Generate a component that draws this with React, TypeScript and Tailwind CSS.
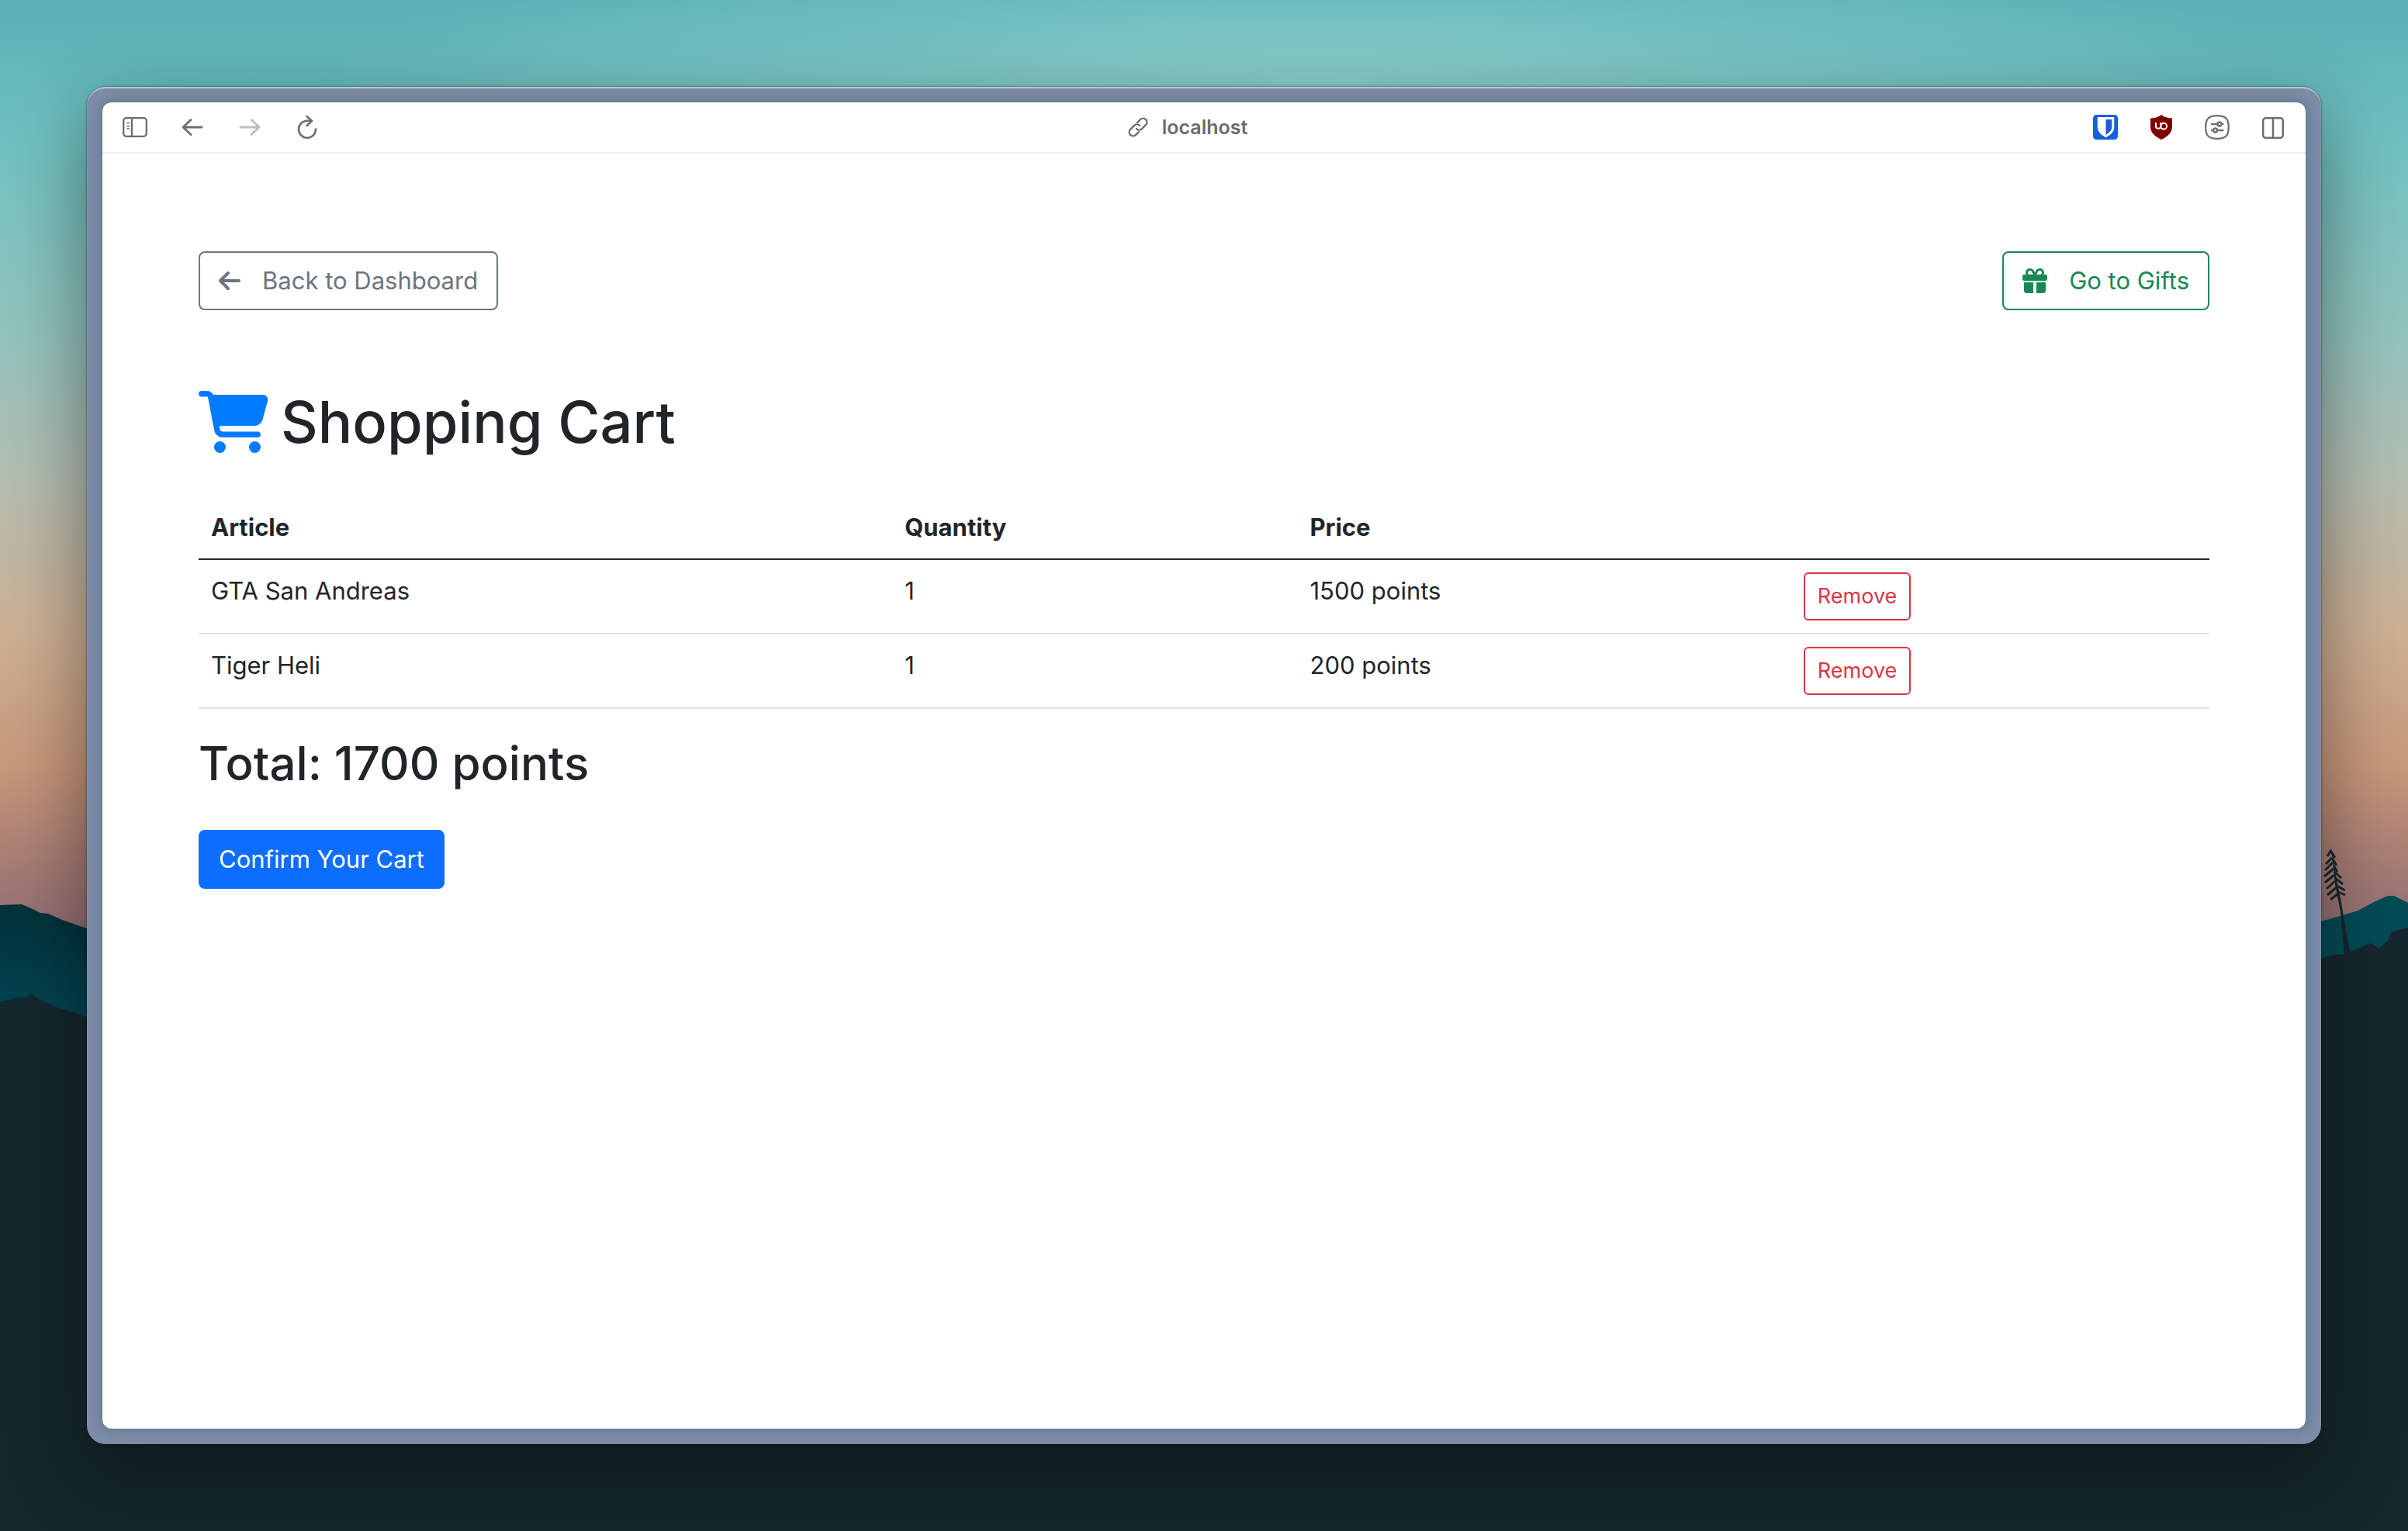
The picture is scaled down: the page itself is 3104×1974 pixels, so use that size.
import React from "react";
import { FaArrowLeft, FaCartShopping, FaGift } from "react-icons/fa6";

type Item = { name: string; quantity: number; price: number };

const items: Item[] = [
  { name: "GTA San Andreas", quantity: 1, price: 1500 },
  { name: "Tiger Heli", quantity: 1, price: 200 },
];

function Wallpaper() {
  return (
    <svg
      aria-hidden="true"
      className="absolute inset-0 h-full w-full"
      viewBox="0 0 3104 1974"
      preserveAspectRatio="none"
    >
      <defs>
        <linearGradient id="sky" x1="0" y1="0" x2="0" y2="1240" gradientUnits="userSpaceOnUse">
          <stop offset="0" stopColor="#58b0b4" />
          <stop offset="0.16" stopColor="#72c2c0" />
          <stop offset="0.35" stopColor="#93c3bd" />
          <stop offset="0.5" stopColor="#b4bdb0" />
          <stop offset="0.66" stopColor="#cdb093" />
          <stop offset="0.8" stopColor="#c7977a" />
          <stop offset="0.9" stopColor="#a67c74" />
          <stop offset="1" stopColor="#876872" />
        </linearGradient>
        <radialGradient id="glow" cx="1700" cy="130" r="1" gradientUnits="userSpaceOnUse" gradientTransform="translate(1700 130) scale(1300 260) translate(-1700 -130)">
          <stop offset="0" stopColor="#a4dcd6" stopOpacity="0.6" />
          <stop offset="1" stopColor="#a4dcd6" stopOpacity="0" />
        </radialGradient>
        <linearGradient id="ridge" x1="0" y1="1160" x2="0" y2="1310" gradientUnits="userSpaceOnUse">
          <stop offset="0" stopColor="#023038" />
          <stop offset="1" stopColor="#024652" />
        </linearGradient>
      </defs>
      <rect width="3104" height="1974" fill="url(#sky)" />
      <rect width="3104" height="400" fill="url(#glow)" />
      <path
        d="M0 1167 28 1166 42 1172 52 1177 62 1178 80 1186 112 1197 300 1260V1400H0Z"
        fill="url(#ridge)"
      />
      <path
        d="M2800 1240 2992 1188 3020 1180 3040 1174 3060 1163 3078 1155 3086 1155 3096 1160 3104 1164V1400H2800Z"
        fill="#044c56"
      />
      <path
        d="M0 1292 20 1287 34 1286 40 1280 48 1287 62 1294 80 1301 100 1307 112 1312 400 1350 2700 1300 2992 1236 3010 1231 3022 1230 3040 1223 3056 1216 3066 1222 3078 1213 3082 1202 3104 1196V1974H0Z"
        fill="#15282e"
      />
      <path d="M3004 1090 3007 1110 3010 1140 3017 1176 3022 1232 3030 1232 3024 1200 3017 1158 3011 1130 3008 1108Z" fill="#13282d" />
      <path
        d="M3005 1096 3000 1104M3005 1098 3010 1106M3006 1106 2998 1114M3006 1106 3012 1116M3007 1112 2997 1122M3008 1116 3013 1124M3008 1120 2996 1130M3009 1124 3018 1132M3009 1128 2997 1138M3010 1132 3020 1140M3010 1136 2999 1146M3012 1142 3023 1148M3012 1144 3000 1154M3014 1150 3023 1154M3014 1152 3004 1160"
        fill="none"
        stroke="#1c2a2d"
        strokeWidth="3"
      />
    </svg>
  );
}

const line = {
  fill: "none",
  stroke: "currentColor",
  strokeWidth: 2.3,
  strokeLinecap: "round" as const,
  strokeLinejoin: "round" as const,
};

function SidebarIcon() {
  return (
    <svg className="size-8" viewBox="0 0 32 32" {...line}>
      <rect x="1.2" y="4.2" width="29.600" height="23.600" rx="3.500" />
      <path d="M12 4V28" />
      <path d="M6 10.500H8.500M6 14.500H8.500M6 18H8.500" strokeWidth="1.7" />
    </svg>
  );
}

function BackIcon() {
  return (
    <svg className="size-8" viewBox="0 0 32 32" {...line} strokeWidth={2.8}>
      <path d="M28 16H4M14 6.5 4 16 14 25.5" />
    </svg>
  );
}

function ForwardIcon() {
  return (
    <svg className="size-8" viewBox="0 0 32 32" {...line} strokeWidth={2.8}>
      <path d="M4 16H28M18 6.5 28 16 18 25.5" />
    </svg>
  );
}

function ReloadIcon() {
  return (
    <svg className="size-8" viewBox="0 0 32 32" {...line} strokeWidth={2.6}>
      <path d="M27 18.5A11 11 0 1 1 16 7.7H21.5" />
      <path d="M15.5 2 22 8 15.5 14" />
    </svg>
  );
}

function LinkIcon() {
  return (
    <svg className="size-[26px]" viewBox="0 0 26 26" {...line}>
      <g transform="rotate(-45 13 13)">
        <path d="M9.500 18H4A5 5 0 0 1 4 8H11A5 5 0 0 1 16 13" />
        <path d="M16.500 8H22A5 5 0 0 1 22 18H15A5 5 0 0 1 10 13" />
      </g>
    </svg>
  );
}

function BitwardenIcon() {
  return (
    <svg className="size-8" viewBox="0 0 32 32">
      <rect width="32" height="32" rx="4.5" fill="#175ddc" />
      <path d="M6.5 3H26.5Q27.3 3 27.3 3.8V16C27.3 22 22 26.500 16.500 29.200 11 26.500 5.700 22 5.700 16V3.800Q5.700 3 6.500 3Z" fill="#fff" />
      <path d="M16.500 6H24.300V16C24.300 20 20.500 23.500 16.500 25.800Z" fill="#175ddc" />
    </svg>
  );
}

function UblockIcon() {
  return (
    <svg className="size-8" viewBox="0 0 32 32">
      <path
        d="M16 0C20 3 25 4.500 30 4.500V15C30 23 25 27.500 16 32 7 27.500 2 23 2 15V4.500C7 4.500 12 3 16 0Z"
        fill="#800000"
      />
      <path
        d="M9 10V15.500A3.300 3.300 0 0 0 15.300 15.500V10M15.300 14.500A3.900 3.900 0 1 0 19.500 10.800 3.900 3.900 0 0 0 15.300 14.500"
        fill="none"
        stroke="#fff"
        strokeWidth="2"
      />
    </svg>
  );
}

function SettingsIcon() {
  return (
    <svg className="size-8" viewBox="0 0 32 32" {...line}>
      <path d="M16 1.200C27 1.200 30.800 5 30.800 16S27 30.800 16 30.800 1.200 27 1.200 16 5 1.200 16 1.200Z" />
      <path d="M9 12H16M22 12H23.500M9 20H10.500M16.500 20H23.500" />
      <circle cx="19" cy="12" r="2.500" />
      <circle cx="13.500" cy="20" r="2.500" />
    </svg>
  );
}

function SplitIcon() {
  return (
    <svg className="size-8" viewBox="0 0 32 32" {...line} strokeWidth={2.5}>
      <rect x="3.200" y="4.200" width="25.600" height="25.600" rx="3.500" />
      <path d="M16 4V30" />
    </svg>
  );
}

function ToolbarButton({ label, children, disabled = false }: { label: string; children: React.ReactNode; disabled?: boolean }) {
  return (
    <button type="button" aria-label={label} disabled={disabled} className="size-8 text-[#6e6e6e] disabled:text-[#bdbdbd]">
      {children}
    </button>
  );
}

function Toolbar() {
  return (
    <header className="grid grid-cols-[1fr_auto_1fr] items-center border-b-2 border-[#f0f0f0] px-[26px] py-4">
      <nav aria-label="Browser" className="flex items-center gap-[42px]">
        <ToolbarButton label="Sidebar"><SidebarIcon /></ToolbarButton>
        <ToolbarButton label="Back"><BackIcon /></ToolbarButton>
        <ToolbarButton label="Forward" disabled><ForwardIcon /></ToolbarButton>
        <ToolbarButton label="Reload"><ReloadIcon /></ToolbarButton>
      </nav>
      <button type="button" className="flex h-8 items-center gap-[18px] pr-[42px] text-[25px] leading-8 font-semibold text-[#6b6b6b]">
        <LinkIcon />
        localhost
      </button>
      <div className="flex items-center justify-end gap-10">
        <ToolbarButton label="Bitwarden"><BitwardenIcon /></ToolbarButton>
        <ToolbarButton label="uBlock Origin"><UblockIcon /></ToolbarButton>
        <ToolbarButton label="Page settings"><SettingsIcon /></ToolbarButton>
        <ToolbarButton label="Split view"><SplitIcon /></ToolbarButton>
      </div>
    </header>
  );
}

function CartTable() {
  return (
    <table className="w-full table-fixed border-collapse text-left text-[31px] leading-[48px]">
      <colgroup>
        <col className="w-[34.5%]" />
        <col className="w-[20.15%]" />
        <col className="w-[24.55%]" />
        <col />
      </colgroup>
      <thead>
        <tr className="border-b-2 border-[#212529]">
          <th scope="col" className="p-4 font-bold">Article</th>
          <th scope="col" className="p-4 font-bold">Quantity</th>
          <th scope="col" className="p-4 font-bold">Price</th>
          <td className="p-4" />
        </tr>
      </thead>
      <tbody>
        {items.map((item) => (
          <tr key={item.name} className="border-b-2 border-[#dee2e6] align-top">
            <td className="p-4">{item.name}</td>
            <td className="p-4">{item.quantity}</td>
            <td className="p-4">{item.price} points</td>
            <td className="p-4">
              <button
                type="button"
                aria-label={`Remove ${item.name}`}
                className="block rounded-md border-2 border-[#dc3545] px-4 py-2 text-[27px] leading-[42px] text-[#dc3545]"
              >
                Remove
              </button>
            </td>
          </tr>
        ))}
      </tbody>
    </table>
  );
}

export default function App() {
  const total = items.reduce((sum, item) => sum + item.quantity * item.price, 0);

  return (
    <div className="relative flex min-h-screen flex-col bg-[#15282e] p-28 font-['Inter',sans-serif] text-[#212529]">
      <Wallpaper />
      <div className="relative flex flex-1 flex-col rounded-3xl bg-[#7a8ca6] p-5 shadow-[0_36px_100px_rgba(0,0,0,0.45),0_0_3px_rgba(0,0,0,0.6),inset_0_2px_1px_rgba(255,255,255,0.5)]">
        <div className="flex flex-1 flex-col rounded-xl bg-white shadow-[0_0_16px_rgba(0,0,0,0.22)]">
          <Toolbar />
          <main className="px-[124px] py-[126px]">
            <div className="flex items-center justify-between text-[31px] leading-[48px]">
              <a href="#dashboard" className="flex items-center gap-7 rounded-lg border-2 border-[#6c757d] px-6 py-3 text-[#6c757d]">
                <FaArrowLeft className="h-8 w-7" />
                Back to Dashboard
              </a>
              <a href="#gifts" className="flex items-center gap-7 rounded-lg border-2 border-[#198754] px-6 py-3 text-[#198754]">
                <FaGift className="size-8" />
                Go to Gifts
              </a>
            </div>
            <h1 className="mt-24 mb-12 flex items-center gap-4 text-[74px] leading-[96px] font-medium">
              <FaCartShopping className="h-20 w-[90px] text-[#007bff]" />
              Shopping Cart
            </h1>
            <CartTable />
            <h2 className="mt-8 mb-12 text-[60px] leading-[76px] font-medium">Total: {total} points</h2>
            <button type="button" className="rounded-lg border-2 border-[#0d6efd] bg-[#0d6efd] px-6 py-3 text-[31px] leading-[48px] text-white">
              Confirm Your Cart
            </button>
          </main>
        </div>
      </div>
    </div>
  );
}
